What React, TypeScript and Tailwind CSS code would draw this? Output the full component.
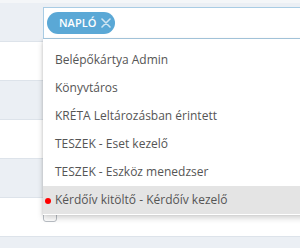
import React from "react";

const roles = [
  "Belépőkártya Admin",
  "Könyvtáros",
  "KRÉTA Leltározásban érintett",
  "TESZEK - Eset kezelő",
  "TESZEK - Eszköz menedzser",
  "Kérdőív kitöltő - Kérdőív kezelő",
];

const Row = ({ gray, children }: { gray?: boolean; children?: React.ReactNode }) => (
  <div
    className={`h-[39px] border-b border-[#dde3ea] ${gray ? "bg-[#ebeff4]" : "bg-white"}`}
  >
    {children}
  </div>
);

const App = () => {
  return (
    <div className="relative w-[300px] h-[248px] overflow-hidden bg-white font-['Open_Sans',sans-serif]">
      <div className="flex flex-col">
        <div className="h-[3px] bg-[#f4f6f8]" />
        <Row gray />
        <Row />
        <Row gray />
        <Row />
        <Row gray />
        <Row>
          <div className="pl-[43px] pt-[10px]">
            <div className="w-[14px] h-[14px] border border-[#b9bec4] rounded-[3px] bg-white" />
          </div>
        </Row>
        <div className="h-[20px] bg-[#ebeff4]" />
      </div>

      <div className="absolute left-[43px] top-[7px] right-[-10px]">
        <div className="h-[32px] flex items-center pl-[3px] bg-white border border-[#a9cce4]">
          <span className="h-[22px] w-[68px] flex items-center gap-[5px] pl-[12px] rounded-full bg-[#5aa8d6] text-white text-[11px] font-semibold">
            NAPLÓ
            <svg width="10" height="10" viewBox="0 0 10 10" className="text-[#cfe5f2]">
              <path d="M1 1L9 9M9 1L1 9" stroke="currentColor" strokeWidth="1.6" strokeLinecap="round" />
            </svg>
          </span>
        </div>
        <ul className="bg-white pt-[7px] pb-[1px] shadow-[0_3px_6px_rgba(0,0,0,0.18),-1px_0_2px_rgba(0,0,0,0.08)]">
          {roles.map((r, i) => {
            const last = i === roles.length - 1;
            return (
              <li
                key={r}
                className={`relative h-[28px] flex items-center pl-[12px] text-[12px] text-[#555] ${last ? "bg-[#e4e4e4]" : ""}`}
              >
                {last && <span className="absolute left-[2px] top-[12px] w-[6px] h-[6px] rounded-full bg-[#ff0000]" />}
                {r}
              </li>
            );
          })}
        </ul>
      </div>
    </div>
  );
};

export default App;
